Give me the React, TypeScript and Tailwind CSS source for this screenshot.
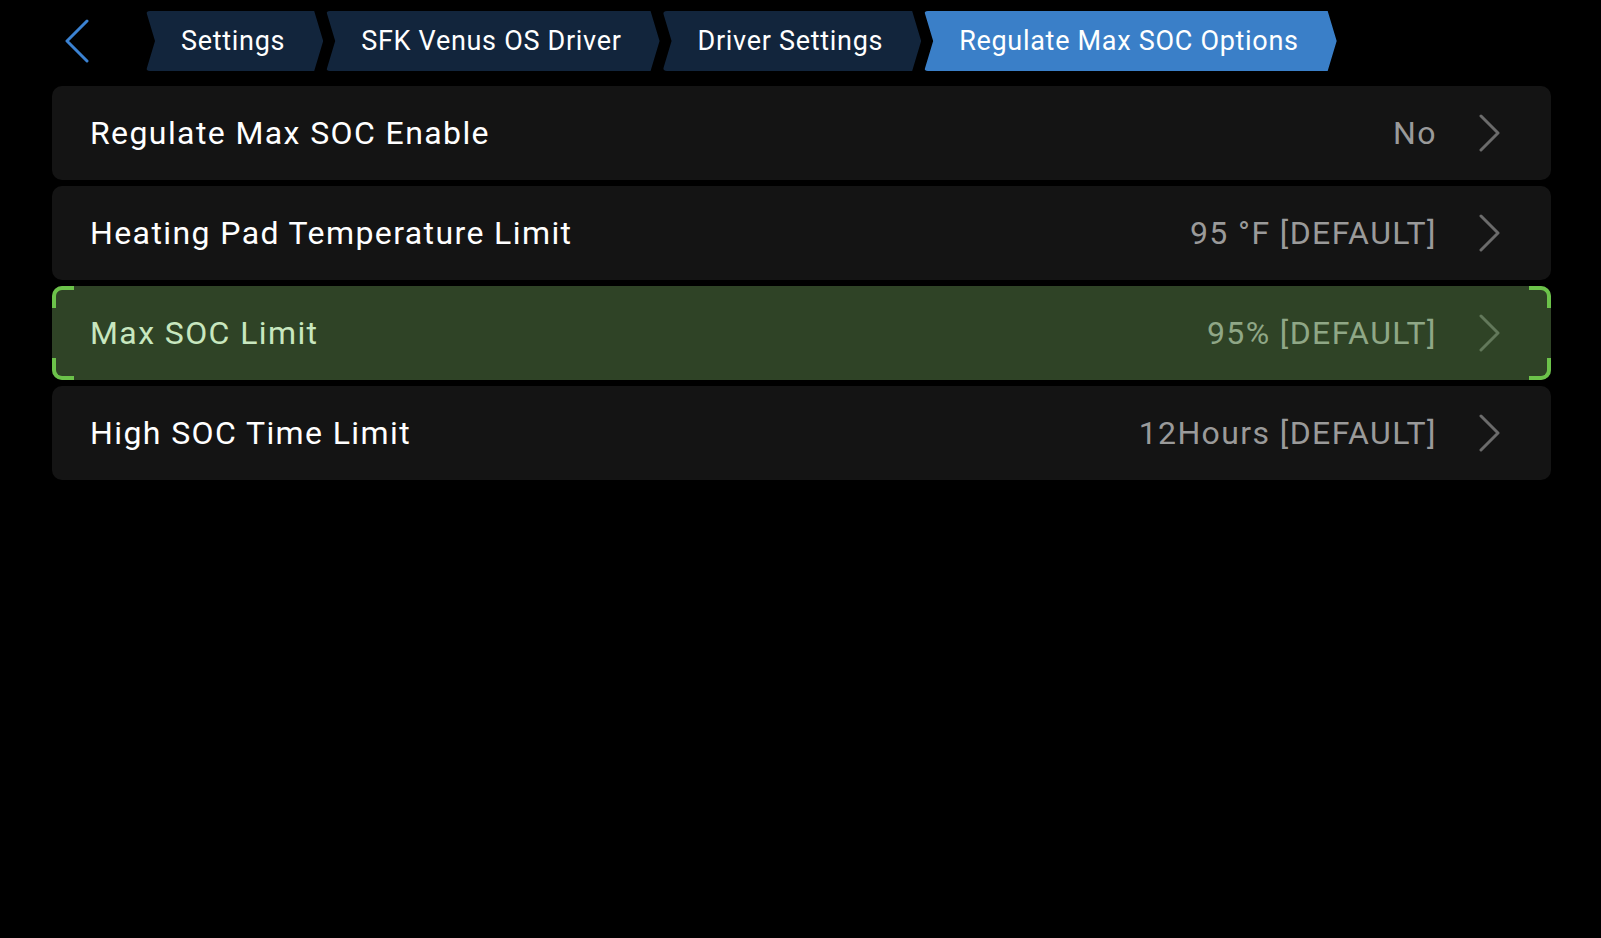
import React from 'react';

type Row = { title: string; value: string; selected?: boolean };

const crumbs = ['Settings', 'SFK Venus OS Driver', 'Driver Settings', 'Regulate Max SOC Options'];

const rows: Row[] = [
  { title: 'Regulate Max SOC Enable', value: 'No' },
  { title: 'Heating Pad Temperature Limit', value: '95 °F [DEFAULT]' },
  { title: 'Max SOC Limit', value: '95% [DEFAULT]', selected: true },
  { title: 'High SOC Time Limit', value: '12Hours [DEFAULT]' },
];

const Chevron = ({ className }: { className?: string }) => (
  <svg width="22" height="38" viewBox="0 0 22 38" fill="none" className={className}>
    <polyline points="2,2 19,19 2,36" stroke="currentColor" strokeWidth="3" strokeLinecap="round" strokeLinejoin="round" />
  </svg>
);

const Crumb = ({ label, active }: { label: string; active?: boolean }) => (
  <div
    className={`h-[60px] flex items-center pl-[35px] pr-[38px] text-[27px] tracking-[0.7px] text-white rounded-[4px] [clip-path:polygon(0_0,calc(100%-9px)_0,100%_50%,calc(100%-9px)_100%,0_100%,9px_50%)] ${
      active ? 'bg-[#3a7fc8]' : 'bg-[#12253c]'
    }`}
  >
    {label}
  </div>
);

const ListRow = ({ row }: { row: Row }) => (
  <div
    className={`relative h-[94px] rounded-[10px] flex items-center pl-[38px] pr-[50px] ${
      row.selected ? 'bg-[#2f4326]' : 'bg-[#141414]'
    }`}
  >
    {row.selected && (
      <>
        <div className="absolute left-0 top-0 w-[22px] h-[22px] border-l-4 border-t-4 border-[#6cc24a] rounded-tl-[10px]" />
        <div className="absolute right-0 top-0 w-[22px] h-[22px] border-r-4 border-t-4 border-[#6cc24a] rounded-tr-[10px]" />
        <div className="absolute left-0 bottom-0 w-[22px] h-[22px] border-l-4 border-b-4 border-[#6cc24a] rounded-bl-[10px]" />
        <div className="absolute right-0 bottom-0 w-[22px] h-[22px] border-r-4 border-b-4 border-[#6cc24a] rounded-br-[10px]" />
      </>
    )}
    <span className={`flex-1 text-[32px] tracking-[1.4px] ${row.selected ? 'text-[#c8e7bf]' : 'text-white'}`}>{row.title}</span>
    <span className={`text-[32px] tracking-[1.4px] ${row.selected ? 'text-[#8fa786]' : 'text-[#9a9a9a]'}`}>{row.value}</span>
    <Chevron className={`ml-[42px] ${row.selected ? 'text-[#62785a]' : 'text-[#6b6b6b]'}`} />
  </div>
);

export default function App() {
  return (
    <div className="w-[1601px] h-[938px] bg-black overflow-hidden font-['Roboto','Liberation_Sans',sans-serif]">
      <div className="flex items-center pt-[11px] h-[71px]">
        <div className="w-[146px] flex pl-[64px] text-[#3b82d2]">
          <svg width="26" height="44" viewBox="0 0 26 44" fill="none">
            <polyline points="23,2 3,22 23,42" stroke="currentColor" strokeWidth="3" strokeLinecap="round" strokeLinejoin="round" />
          </svg>
        </div>
        <div className="flex gap-[3px]">
          {crumbs.map((c, i) => (
            <Crumb key={c} label={c} active={i === crumbs.length - 1} />
          ))}
        </div>
      </div>
      <div className="flex flex-col gap-[6px] pl-[52px] pr-[50px] pt-[15px]">
        {rows.map((r) => (
          <ListRow key={r.title} row={r} />
        ))}
      </div>
    </div>
  );
}
